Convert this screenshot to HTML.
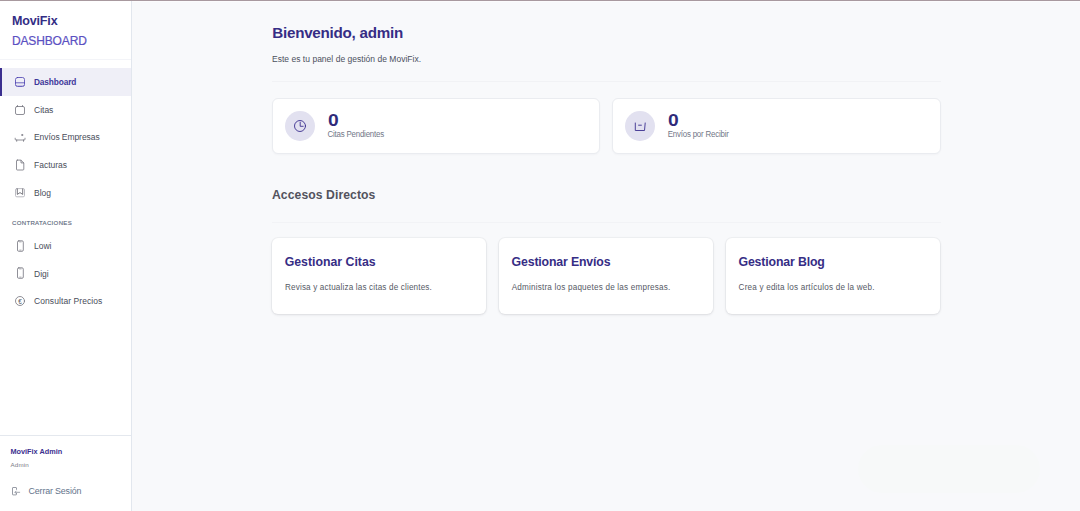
<!DOCTYPE html>
<html lang="es">
<head>
<meta charset="utf-8">
<title>MoviFix Dashboard</title>
<style>
*{margin:0;padding:0;box-sizing:border-box}
html,body{width:1080px;height:511px;overflow:hidden}
body{position:relative;background:#f8f9fb;font-family:"Liberation Sans",sans-serif;color:#4a4a55}
.abs{position:absolute;white-space:nowrap;line-height:1}
#topline{position:absolute;left:0;top:0;width:1080px;height:1px;background:#a8999f;z-index:10}
#topline2{position:absolute;left:132px;top:1px;width:948px;height:1px;background:#fcfcfd;z-index:10}
#sidebar{position:absolute;left:0;top:0;width:132px;height:511px;background:#fff;border-right:1px solid #e2e7ee}
#logo1{left:12px;top:15px;font-size:12.5px;font-weight:700;color:#332d85}
#logo2{left:12px;top:34.5px;font-size:12px;color:#5b50c2;-webkit-text-stroke:0.2px #5b50c2}
.hr{position:absolute;height:1px;background:#f0f2f6}
#active{position:absolute;left:0;top:68px;width:131px;height:28px;background:#efeff7;border-left:2px solid #3b2f8f}
.nav{font-size:8.5px;color:#494d5a;left:34px}
.nav.on{font-weight:700;color:#40379a;font-size:8.3px}
.ico{position:absolute;left:15px;width:10px;height:10px;overflow:visible}
.ico *{fill:none;stroke:#73737d;stroke-width:0.8;stroke-linecap:round;stroke-linejoin:round}
.ico.on *{stroke:#4a3fb0}
#sect{left:12px;top:219.5px;font-size:6px;color:#606a7e;-webkit-text-stroke:0.15px #606a7e}
.card{position:absolute;background:#fff;border-radius:6px}
.stat{border:1px solid #eaecf0;box-shadow:0 1px 2px rgba(20,20,60,0.03)}
.link{box-shadow:0 1px 3px rgba(15,23,42,0.10),0 0 0 1px rgba(15,23,42,0.03)}
.circ{position:absolute;width:30px;height:30px;border-radius:50%;background:#e2e1f0}
.num{font-size:16px;font-weight:700;color:#2f2a7a;transform-origin:0 0;transform:scaleX(1.2)}
.lab{font-size:7.9px;color:#727787;transform-origin:0 0;transform:scaleY(1.15)}
.ct{font-size:12.3px;font-weight:700;color:#362d85}
.cd{font-size:8.15px;color:#565a66}

/*TUNE*/
#logo1{letter-spacing:-0.15px}
#n_dash{letter-spacing:-0.12px}
#n_env{letter-spacing:-0.07px}
#sect{letter-spacing:0.35px}
#n_cons{letter-spacing:0.08px}
#u2{letter-spacing:0.18px}
#h1{letter-spacing:-0.26px}
#sub{letter-spacing:0.02px}
#lab1{letter-spacing:-0.20px}
#lab2{letter-spacing:-0.19px}
#h2{letter-spacing:0.07px}
#cd1{letter-spacing:0.16px}
#ct2{letter-spacing:-0.15px}
#cd2{letter-spacing:0.20px}
#ct3{letter-spacing:-0.14px}
#cd3{letter-spacing:0.20px}
#logout{letter-spacing:-0.16px}
#logo2{letter-spacing:-0.15px}
/*ENDTUNE*/
</style>
</head>
<body>
<div id="topline"></div><div id="topline2"></div>
<div id="sidebar">
  <div class="abs" id="logo1">MoviFix</div>
  <div class="abs" id="logo2">DASHBOARD</div>
  <div class="hr" style="left:0;top:59px;width:131px;background:#f3f4f8"></div>
  <div id="active"></div>

  <svg class="ico on" style="top:77px" viewBox="0 0 10 10"><rect x="0.5" y="0.5" width="9" height="9" rx="2"/><path d="M0.5 5.8h9"/><path d="M1 8.4h8" style="opacity:.35"/></svg>
  <div id="n_dash" class="abs nav on" style="top:78.2px">Dashboard</div>

  <svg class="ico" style="top:104.5px" viewBox="0 0 10 10"><rect x="0.5" y="1.5" width="9" height="8" rx="1.5"/><path d="M2.5 0.5v1M7.5 0.5v1"/></svg>
  <div id="n_citas" class="abs nav" style="top:105.5px">Citas</div>

  <svg class="ico" style="top:132px" viewBox="0 0 10 10"><path d="M0.2 6.2v1a.8 .8 0 0 0 .8 .8h8.2a.8 .8 0 0 0 .8-.8v-1M1.7 8v1.3M8.5 8v1.3"/><circle cx="7.1" cy="3" r="0.6"/></svg>
  <div id="n_env" class="abs nav" style="top:133px">Envíos Empresas</div>

  <svg class="ico" style="top:159.5px" viewBox="0 0 10 10"><path d="M2.3 0.1h3.6l2.9 2.9v6.2a.8 .8 0 0 1-.8 .8h-5.7a.8 .8 0 0 1-.8-.8v-8.3a.8 .8 0 0 1 .8-.8z"/><path d="M6 0.3v2.6h2.6"/></svg>
  <div id="n_fact" class="abs nav" style="top:160.5px">Facturas</div>

  <svg class="ico" style="top:187.5px" viewBox="0 0 10 10"><rect x="0.5" y="0.6" width="9" height="8.2" rx="1.3" style="stroke:#a9a9b2"/><path d="M2.3 1v5.4l2.7-1.8l2.7 1.8v-5.4" style="stroke:#55555f"/></svg>
  <div id="n_blog" class="abs nav" style="top:188.6px">Blog</div>

  <div class="abs" id="sect">CONTRATACIONES</div>

  <svg class="ico" style="top:240.5px" viewBox="0 0 10 10"><rect x="2.5" y="-0.2" width="5.8" height="10.5" rx="1.3"/><path d="M4.6 0.9h1.6M4.7 9.1h1.4" style="stroke-width:0.6"/></svg>
  <div id="n_lowi" class="abs nav" style="top:242px">Lowi</div>

  <svg class="ico" style="top:268px" viewBox="0 0 10 10"><rect x="2.5" y="-0.2" width="5.8" height="10.5" rx="1.3"/><path d="M4.6 0.9h1.6M4.7 9.1h1.4" style="stroke-width:0.6"/></svg>
  <div id="n_digi" class="abs nav" style="top:269.5px">Digi</div>

  <svg class="ico" style="top:295.7px" viewBox="0 0 10 10"><circle cx="5" cy="5" r="4.5"/><text x="5" y="7.9" text-anchor="middle" style="font-size:6.4px;fill:#5c5c66;stroke:none;font-family:'Liberation Sans',sans-serif">€</text></svg>
  <div id="n_cons" class="abs nav" style="top:297px">Consultar Precios</div>

  <div class="hr" style="left:0;top:435px;width:131px;background:#e4e8ee"></div>
  <div class="abs" id="u1" style="left:10.5px;top:447.5px;font-size:7.3px;font-weight:700;color:#3b2f8f">MoviFix Admin</div>
  <div class="abs" id="u2" style="left:10.5px;top:461.5px;font-size:6.2px;color:#7a7a85">Admin</div>
  <svg class="ico" style="top:485.5px;left:12px;width:9px;height:10px" viewBox="0 0 9 10"><path d="M4.5 3.4V2a.5 .5 0 0 0-.5-.5H1a.5 .5 0 0 0-.5 .5v6.4a.5 .5 0 0 0 .5 .5h3a.5 .5 0 0 0 .5-.5V7.4" style="stroke:#7d838f"/><path d="M7.7 6.3h-4.6M4.1 5.1l-1.1 1.2l1.1 1.2" style="stroke:#8a8f9b"/></svg>
  <div class="abs" id="logout" style="left:28.6px;top:486.8px;font-size:8.9px;color:#64748b">Cerrar Sesión</div>
</div>

<div id="main">
  <div class="abs" id="h1" style="left:272.3px;top:25.3px;font-size:15.2px;font-weight:700;color:#362d85">Bienvenido, admin</div>
  <div class="abs" id="sub" style="left:272px;top:54.7px;font-size:8.5px;color:#4c505d">Este es tu panel de gestión de MoviFix.</div>
  <div class="hr" style="left:272px;top:81px;width:668.6px;background:#f1f2f5"></div>

  <div class="card stat" style="left:272.2px;top:98px;width:328.1px;height:56px"></div>
  <div class="circ" style="left:285px;top:111px"></div>
  <svg class="abs" style="left:294px;top:119.5px;width:12px;height:12px" viewBox="0 0 12 12" fill="none" stroke="#3b2f8f" stroke-width="0.9" stroke-linecap="round" stroke-linejoin="round"><circle cx="6" cy="6" r="5.5"/><path d="M6.2 2.2v4.1h3"/></svg>
  <div class="abs num" style="left:327.8px;top:113px">0</div>
  <div class="abs lab" id="lab1" style="left:327.5px;top:129.8px">Citas Pendientes</div>

  <div class="card stat" style="left:612.3px;top:98px;width:328.4px;height:56px"></div>
  <div class="circ" style="left:625px;top:111px"></div>
  <svg class="abs" style="left:634px;top:120px;width:12px;height:12px" viewBox="0 0 12 12" fill="none" stroke="#3b2f8f" stroke-width="0.9" stroke-linecap="round" stroke-linejoin="round"><path d="M1.3 3v7.5h9.2l.7-7.5"/><path d="M4.6 5.2h2.8"/></svg>
  <div class="abs num" style="left:668.1px;top:113px">0</div>
  <div class="abs lab" id="lab2" style="left:667.7px;top:129.8px">Envíos por Recibir</div>

  <div class="abs" id="h2" style="left:272px;top:189px;font-size:12.2px;font-weight:700;color:#53535d">Accesos Directos</div>
  <div class="hr" style="left:272px;top:222px;width:668.6px;background:#f2f3f6"></div>

  <div class="card link" style="left:272.3px;top:238.3px;width:214.1px;height:75.5px"></div>
  <div class="abs ct" id="ct1" style="left:284.7px;top:255.5px">Gestionar Citas</div>
  <div class="abs cd" id="cd1" style="left:285px;top:284.3px">Revisa y actualiza las citas de clientes.</div>

  <div class="card link" style="left:499.1px;top:238.3px;width:214.4px;height:75.5px"></div>
  <div class="abs ct" id="ct2" style="left:511.6px;top:255.5px">Gestionar Envíos</div>
  <div class="abs cd" id="cd2" style="left:511.7px;top:284.3px">Administra los paquetes de las empresas.</div>

  <div class="card link" style="left:726px;top:238.3px;width:214.1px;height:75.5px"></div>
  <div class="abs ct" id="ct3" style="left:738.5px;top:255.5px">Gestionar Blog</div>
  <div class="abs cd" id="cd3" style="left:738.6px;top:284.3px">Crea y edita los artículos de la web.</div>

  <div style="position:absolute;left:857.5px;top:444.5px;width:182.5px;height:48px;border-radius:24px;background:#f7f9f9"></div>
</div>
</body>
</html>
